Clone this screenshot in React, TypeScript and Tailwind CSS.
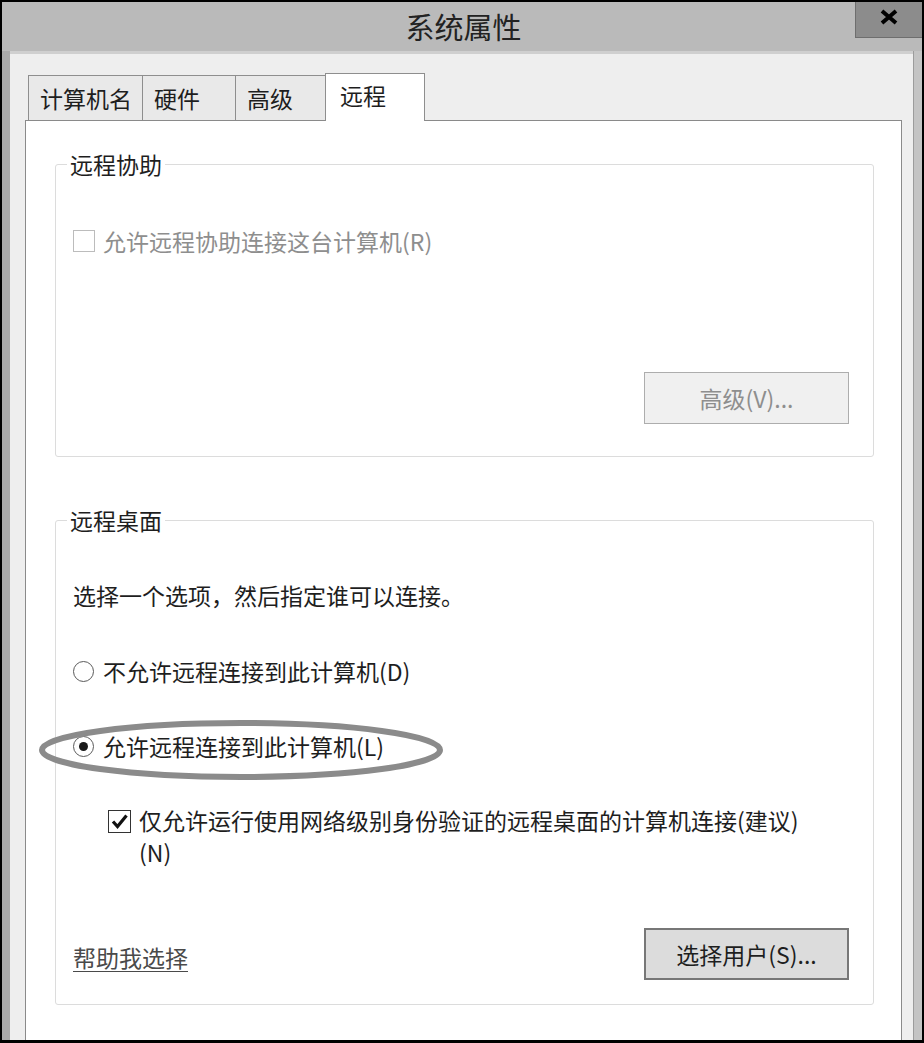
import React from "react";

const font = "font-['Noto_Sans_CJK_SC','Microsoft_YaHei','Noto_Sans',sans-serif]";

function Radio({ checked }: { checked?: boolean }) {
  return (
    <span className="flex h-[21px] w-[21px] shrink-0 items-center justify-center rounded-full border border-[#5a5a5a] bg-white">
      {checked && <span className="h-[9px] w-[9px] rounded-full bg-[#1a1a1a]" />}
    </span>
  );
}

function Tab({ label, w, selected }: { label: string; w: string; selected?: boolean }) {
  if (selected) {
    return (
      <div
        className={`relative z-10 -mb-px -ml-px flex h-[48px] items-center border border-b-0 border-[#8e8e8e] bg-white pb-[5px] pl-[14px] ${w}`}
      >
        {label}
      </div>
    );
  }
  return (
    <div className={`-ml-px flex h-[45px] items-center border border-b-0 border-[#8e8e8e] bg-[#e9e9e9] pl-[11px] first:ml-0 ${w}`}>
      {label}
    </div>
  );
}

export default function App() {
  return (
    <div
      className={`${font} flex h-[1043px] w-[924px] flex-col overflow-hidden border-b-[3px] border-l-2 border-r-2 border-t-2 border-black bg-[#b3b3b3] text-[23px] leading-[28px] text-[#1e1e1e]`}
    >
      {/* Title bar */}
      <div className="relative flex h-[49px] shrink-0 items-center justify-center bg-[#bababa]">
        <span className="mb-[1px] ml-[3px] text-[29px] leading-[34px] text-[#222]">系统属性</span>
        <div className="absolute right-0 top-0 flex h-[36px] w-[67px] items-center justify-center border-b border-l border-[#6e6e6e] bg-[#8c8c8c]">
          <svg width="20" height="16" viewBox="0 0 20 16" className="mb-[5px]">
            <path d="M3 2 L17 14 M17 2 L3 14" stroke="#000" strokeWidth="4" strokeLinecap="butt" />
          </svg>
        </div>
      </div>

      {/* Frame + client */}
      <div className="flex min-h-0 flex-1">
        <div className="w-[8px] shrink-0 bg-[#a9a9a9]" />
        <div className="flex min-w-0 flex-1 flex-col border-t-[3px] border-[#cfcfcf] bg-[#eeeeee] pl-[15px] pr-[11px] pt-[19px]">
          {/* Tabs */}
          <div className="flex shrink-0 items-end pl-[3px]">
            <Tab label="计算机名" w="w-[115px]" />
            <Tab label="硬件" w="w-[94px]" />
            <Tab label="高级" w="w-[91px]" />
            <Tab label="远程" w="w-[100px]" selected />
          </div>

          {/* Page */}
          <div className="flex flex-1 flex-col border border-b-0 border-[#8a8a8a] bg-white pt-[43px]">
            {/* Group 1 */}
            <div className="ml-[29px] mr-[27px] rounded-[3px] border border-[#dcdcdc]">
              <div className="-mt-[15px] ml-[11px] h-[28px] w-fit bg-white px-[3px]">远程协助</div>
              <div className="flex flex-col pb-[32px] pl-[17px] pr-[24px]">
                <div className="mt-[49px] flex h-[28px] items-center gap-[8px] text-[#8e8e8e]">
                  <span className="h-[22px] w-[22px] shrink-0 border border-[#bcbcbc] bg-white" />
                  <span>允许远程协助连接这台计算机(R)</span>
                </div>
                <div className="mt-[117px] flex justify-end">
                  <div className="flex h-[52px] w-[205px] items-center justify-center border border-[#adadad] bg-[#f0f0f0] text-[#8e8e8e]">
                    高级(V)...
                  </div>
                </div>
              </div>
            </div>

            {/* Group 2 */}
            <div className="ml-[29px] mr-[27px] mt-[63px] rounded-[3px] border border-[#dcdcdc]">
              <div className="-mt-[15px] ml-[11px] h-[28px] w-fit bg-white px-[3px]">远程桌面</div>
              <div className="flex flex-col pb-[24px] pl-[17px] pr-[24px]">
                <div className="mt-[47px] h-[28px]">选择一个选项，然后指定谁可以连接。</div>
                <div className="mt-[48px] flex h-[28px] items-center gap-[9px]">
                  <Radio />
                  <span>不允许远程连接到此计算机(D)</span>
                </div>
                <div className="relative mt-[47px] flex h-[28px] items-center gap-[9px]">
                  <Radio checked />
                  <span>允许远程连接到此计算机(L)</span>
                  <svg
                    width="406"
                    height="62"
                    viewBox="0 0 406 62"
                    className="pointer-events-none absolute left-[-35px] top-[-13px]"
                  >
                    <ellipse cx="203" cy="31" rx="199" ry="27" fill="none" stroke="#8b8b8b" strokeWidth="6" />
                  </svg>
                </div>
                <div className="mt-[44px] flex items-start gap-[8px] pl-[35px] leading-[32px]">
                  <span className="mt-[6px] flex h-[23px] w-[23px] shrink-0 items-center justify-center border border-[#333] bg-white">
                    <svg width="19" height="17" viewBox="0 0 19 17">
                      <path d="M3 8.5 L7.5 13.5 L16.5 2.5" fill="none" stroke="#111" strokeWidth="3.2" />
                    </svg>
                  </span>
                  <span>
                    仅允许运行使用网络级别身份验证的远程桌面的计算机连接(建议)
                    <br />
                    (N)
                  </span>
                </div>
                <div className="mt-[60px] flex items-center justify-between">
                  <span className="mt-[6px] text-[#4a4a4a] underline decoration-1 underline-offset-[4px]">帮助我选择</span>
                  <div className="flex h-[52px] w-[205px] items-center justify-center border-2 border-[#777] bg-[#dcdcdc]">
                    选择用户(S)...
                  </div>
                </div>
              </div>
            </div>
          </div>
        </div>
        <div className="w-[9px] shrink-0 border-l border-[#9c9c9c] bg-[#c4c4c4]" />
      </div>
    </div>
  );
}
